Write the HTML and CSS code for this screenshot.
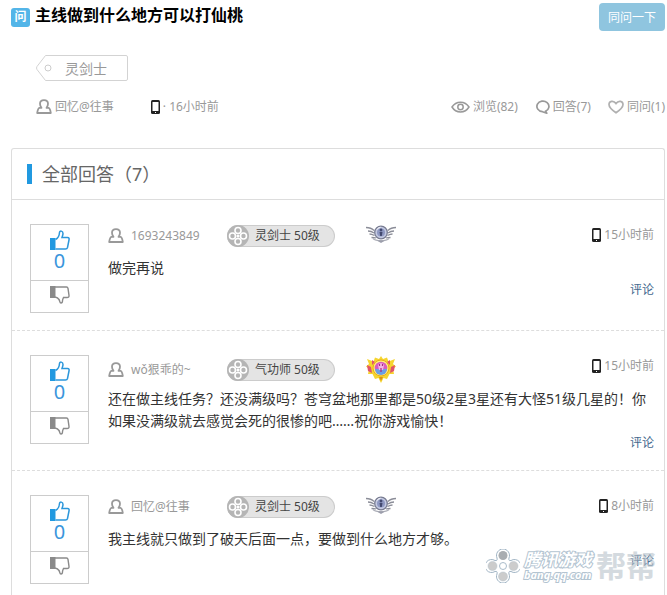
FILE: index.html
```html
<!DOCTYPE html>
<html lang="zh-CN">
<head>
    <meta charset="UTF-8">
    <meta name="viewport" content="width=device-width, initial-scale=1.0">
    <title>主线做到什么地方可以打仙桃</title>
    <link rel="stylesheet" href="styles.css">
</head>
<body>
    <!-- shared icons -->
    <svg class="sprite" aria-hidden="true">
        <symbol id="user" viewBox="0 0 16 16">
            <path d="M5.500 8.800C4.300 7.500 4 6 4 4.800C4 2.500 5.500 1.200 8 1.200S12 2.500 12 4.800C12 6 11.700 7.500 10.500 8.800H12.500C13.500 9 14.300 10.500 14.800 14H1.200C1.700 10.500 2.500 9 3.500 8.800z" fill="none" stroke="#999" stroke-width="1.800" stroke-linejoin="round"/>
        </symbol>
        <symbol id="phone" viewBox="0 0 9 14">
            <rect x="0" y="0" width="9" height="14" rx="1.5" fill="#222"/>
            <rect x="1.5" y="2" width="6" height="9" fill="#fff"/>
            <rect x="4" y="12" width="1" height="1" fill="#fff"/>
        </symbol>
        <symbol id="up" viewBox="0 0 20 20">
            <path d="M5.5 9.5C8.500 8 9.300 6 9.500 2.500C9.600.500 13 .500 13 3.500C13 5 12.500 6 12 7.500H17.500C19 7.500 19.300 8.500 19 10L17.500 17.500C17.200 18.700 16.700 19 15.500 19H5.500" fill="none" stroke="#2b97db" stroke-width="1.500"/>
            <path d="M0 8h5.500v12H0z" fill="#2199e0"/>
        </symbol>
        <symbol id="down" viewBox="0 0 20 18">
            <path d="M5 1h11.500c1 0 1.300.400 1.500 1.300l1 7c.200 1.500-.500 2.200-2 2.200h-3.500c-.500 1-1 2-1 3.200c0 1.500-.600 2.300-1.500 2.300c-1.500 0-1-2-2-3.500C8 12 7 11.500 5 11" fill="none" stroke="#8a8a8a" stroke-width="1.400"/>
            <path d="M0 0h5.500v12H0z" fill="#8a8a8a"/>
        </symbol>
        <symbol id="clover" viewBox="0 0 22 22">
            <circle cx="11" cy="11" r="11" fill="#b5b5b5"/>
            <g fill="#b5b5b5" stroke="#fff" stroke-width="1.600">
                <circle cx="11" cy="5.500" r="3"/>
                <circle cx="5.500" cy="11" r="3"/>
                <circle cx="16.500" cy="11" r="3"/>
                <circle cx="11" cy="16.500" r="3"/>
            </g>
            <circle cx="11" cy="11" r="1.500" fill="#fff"/>
        </symbol>
        <symbol id="silver" viewBox="0 0 30 22">
            <g fill="none" stroke="#8b8d98" stroke-width="1.300">
                <path d="M0 2.500c3 0 6 1 8 3M2 6c2 0 4 .500 6 2M3.500 9c2 0 3 .500 5 1.500M5.500 12.500c2 0 3 0 4.500.500"/>
                <path d="M30 2.500c-3 0-6 1-8 3M28 6c-2 0-4 .500-6 2M26.500 9c-2 0-3 .500-5 1.500M24.500 12.500c-2 0-3 0-4.500.500"/>
                <path d="M7 13.500c3 3 13 3 16 0" stroke="#aeb0b9"/>
            </g>
            <circle cx="15" cy="7.500" r="6.300" fill="#c4cae2" stroke="#777b91" stroke-width="1.300"/>
            <circle cx="15" cy="7.500" r="4" fill="#8e98c2"/>
            <circle cx="15" cy="5" r="1.400" fill="#42496f"/>
            <path d="M13.500 7h3l-.700 4h-1.600z" fill="#42496f"/>
            <path d="M11 4.500c1-1.500 2-2 3.500-2.300" fill="none" stroke="#fff"/>
            <path d="M11 15.500h8l-4 2.500z" fill="#9b9dab"/>
        </symbol>
        <symbol id="gold" viewBox="0 0 30 28">
            <path d="M15 0l2 3 4-1.500 1.500 4L29 3l-2 5 3 2.500-3 2.500 1 5-4.500 0-2.500 5-3.500-1L15 27l-2.500-5L9 23l-2.500-5L2 18l1-5-3-2.500L3 8 1 3l6.500 2.500L9 1.500 13 3z" fill="#f6d52f"/>
            <path d="M1 9l4 2 1 6-4-2zM29 9l-4 2-1 6 4-2zM6 4l3 2-3 3zM24 4l-3 2 3 3z" fill="#e0526b"/>
            <path d="M13 21h4l-2 4z" fill="#d99217"/>
            <circle cx="15" cy="12" r="8" fill="#fff07a" stroke="#e8aa1c"/>
            <circle cx="15" cy="12" r="6.300" fill="#d95bc0"/>
            <path d="M9 13a6 6 0 0 0 12 0z" fill="#6a9fe6"/>
            <path d="M12 9a3.500 3.500 0 0 1 6 0l-1 5h-4z" fill="#f5b5e5"/>
            <path d="M13.500 8v2M16.500 8v2M15 12v4" stroke="#a72b80" stroke-width="1.200"/>
        </symbol>
    </svg>

    <header class="question">
        <div class="title-row">
            <span class="ask">问</span>
            <h1>主线做到什么地方可以打仙桃</h1>
            <button type="button" class="same-btn">同问一下</button>
        </div>
        <a href="#" class="tag">
            <svg viewBox="0 0 92 26" aria-hidden="true">
                <path d="M9.500.500H90a1.500 1.500 0 0 1 1.500 1.500v22a1.500 1.500 0 0 1-1.500 1.500H9.500L1 14.500q-1-1.500 0-3z" fill="#fff" stroke="#d3d3d3"/>
                <circle cx="12" cy="13" r="3" fill="none" stroke="#ccc"/>
            </svg>
            <span>灵剑士</span>
        </a>
        <div class="meta">
            <span class="author"><svg class="i-user"><use href="#user"/></svg>回忆@往事</span>
            <span class="when"><svg class="i-phone"><use href="#phone"/></svg>· 16小时前</span>
            <div class="counts">
                <span>
                    <svg width="19" height="12" viewBox="0 0 19 12" fill="none" stroke="#999" stroke-width="1.500"><path d="M1 6c4-6.500 13-6.500 17 0c-4 6.500-13 6.500-17 0z"/><circle cx="9.500" cy="6" r="2.700"/></svg>浏览(82)
                </span>
                <span>
                    <svg width="15" height="14" viewBox="0 0 15 14" fill="none" stroke="#999" stroke-width="1.700"><path d="M10.500 11.200A6 5.300 0 1 0 7.500 11.700L11.800 13.200L10.500 11.200z" stroke-linejoin="round"/></svg>回答(7)
                </span>
                <span>
                    <svg width="16" height="14" viewBox="0 0 16 14" fill="none" stroke="#b0b0b0" stroke-width="1.700"><path d="M8 12.800C4 10 1 7.500 1 4.500C1 1 5.500 0 8 3.500C10.500 0 15 1 15 4.500C15 7.500 12 10 8 12.800z"/></svg>同问(1)
                </span>
            </div>
        </div>
    </header>

    <main class="answers">
        <h2>全部回答（7）</h2>

        <article class="answer">
            <div class="vote">
                <button type="button" class="agree" aria-label="顶"><svg><use href="#up"/></svg>0</button>
                <button type="button" class="against" aria-label="踩"><svg><use href="#down"/></svg></button>
            </div>
            <div class="body">
                <div class="head">
                    <div class="who">
                        <svg class="i-user"><use href="#user"/></svg>
                        <a href="#" class="name">1693243849</a>
                        <span class="level"><svg><use href="#clover"/></svg>灵剑士 50级</span>
                        <svg class="medal"><use href="#silver"/></svg>
                    </div>
                    <span class="time"><svg class="i-phone"><use href="#phone"/></svg>15小时前</span>
                </div>
                <p>做完再说</p>
                <a href="#" class="comment">评论</a>
            </div>
        </article>

        <article class="answer">
            <div class="vote">
                <button type="button" class="agree" aria-label="顶"><svg><use href="#up"/></svg>0</button>
                <button type="button" class="against" aria-label="踩"><svg><use href="#down"/></svg></button>
            </div>
            <div class="body">
                <div class="head">
                    <div class="who">
                        <svg class="i-user"><use href="#user"/></svg>
                        <a href="#" class="name">wǒ狠乖的~</a>
                        <span class="level"><svg><use href="#clover"/></svg>气功师 50级</span>
                        <svg class="medal gold"><use href="#gold"/></svg>
                    </div>
                    <span class="time"><svg class="i-phone"><use href="#phone"/></svg>15小时前</span>
                </div>
                <p>还在做主线任务？还没满级吗？苍穹盆地那里都是50级2星3星还有大怪51级几星的！你如果没满级就去感觉会死的很惨的吧……祝你游戏愉快！</p>
                <a href="#" class="comment">评论</a>
            </div>
        </article>

        <article class="answer">
            <div class="vote">
                <button type="button" class="agree" aria-label="顶"><svg><use href="#up"/></svg>0</button>
                <button type="button" class="against" aria-label="踩"><svg><use href="#down"/></svg></button>
            </div>
            <div class="body">
                <div class="head">
                    <div class="who">
                        <svg class="i-user"><use href="#user"/></svg>
                        <a href="#" class="name">回忆@往事</a>
                        <span class="level"><svg><use href="#clover"/></svg>灵剑士 50级</span>
                        <svg class="medal"><use href="#silver"/></svg>
                    </div>
                    <span class="time"><svg class="i-phone"><use href="#phone"/></svg>8小时前</span>
                </div>
                <p>我主线就只做到了破天后面一点，要做到什么地方才够。</p>
                <a href="#" class="comment">评论</a>
            </div>
            <div class="watermark">
                <svg width="34" height="34" viewBox="0 0 34 34">
                    <path d="M11 9a6.500 6.500 0 1 1 12 0c-.500 2 0 3 2 2.500a6.500 6.500 0 1 1 0 11c-2-.500-2.500.500-2 2.500a6.500 6.500 0 1 1-12 0c.500-2 0-3-2-2.500a6.500 6.500 0 1 1 0-11c2 .500 2.500-.500 2-2.500z" fill="#fff" stroke="#a0b4c4"/>
                    <circle cx="17" cy="6.500" r="4.500" fill="#a9adb1"/>
                    <g fill="#ccc" stroke="#b5c2cc" stroke-width=".500">
                        <circle cx="6.500" cy="17" r="4.500"/>
                        <circle cx="27.500" cy="17" r="4.500"/>
                        <circle cx="17" cy="27.500" r="4.500"/>
                    </g>
                    <circle cx="17" cy="17" r="3.500" fill="#fff" stroke="#a9bccb"/>
                </svg>
                <div class="brand">
                    <span>腾讯游戏</span>
                    <small>bang.qq.com</small>
                </div>
                <b>帮帮</b>
            </div>
        </article>
    </main>
</body>
</html>
```
FILE: styles.css
```css
* {
    margin: 0;
    padding: 0;
    box-sizing: border-box;
}
body {
    padding: 3px 2px 0 11px;
    background-color: #fff;
    color: #999;
    font-family: "Noto Sans", "Noto Sans CJK SC", sans-serif;
    font-size: 12px;
    line-height: 20px;
}
a {
    color: inherit;
    text-decoration: none;
}
button {
    font-family: inherit;
    cursor: pointer;
}
svg {
    display: block;
    flex: none;
}
.sprite {
    position: absolute;
    width: 0;
    height: 0;
}
.i-user {
    width: 16px;
    height: 16px;
}
.i-phone {
    width: 9px;
    height: 14px;
}

/* question */
.title-row {
    display: flex;
    align-items: center;
    height: 28px;
}
.ask {
    width: 19px;
    height: 19px;
    margin-right: 5px;
    border-radius: 3px;
    background-color: #53b5e8;
    color: #fff;
    font-weight: 700;
    line-height: 18px;
    text-align: center;
}
h1 {
    flex: 1;
    color: #000;
    font-size: 16px;
    line-height: 24px;
    padding-bottom: 4px;
}
.same-btn {
    width: 66px;
    height: 28px;
    border: 0;
    border-radius: 4px;
    background-color: #8fc5df;
    color: #fff;
    font-size: 12px;
}
.tag {
    display: grid;
    width: 92px;
    height: 26px;
    margin: 24px 0 0 25px;
}
.tag svg,
.tag span {
    grid-area: 1 / 1;
}
.tag span {
    padding-left: 29px;
    font-size: 14px;
    line-height: 28px;
}
.meta {
    display: flex;
    align-items: center;
    margin: 16px 0 31px 25px;
}
.meta span {
    display: flex;
    align-items: center;
    gap: 3px;
}
.when {
    margin-left: 37px;
}
.counts {
    display: flex;
    gap: 17px;
    margin-left: auto;
}

/* answers */
.answers {
    border: 1px solid #ddd;
    border-bottom: 0;
    border-radius: 3px 3px 0 0;
}
h2 {
    display: flex;
    align-items: center;
    height: 51px;
    padding-left: 15px;
    border-bottom: 1px solid #ddd;
    color: #666;
    font-size: 18px;
    font-weight: 400;
}
h2::before {
    content: "";
    width: 5px;
    height: 20px;
    margin-right: 10px;
    background-color: #2199e0;
}
.answer {
    position: relative;
    display: flex;
    align-items: flex-start;
    gap: 19px;
    padding: 24px 10px 17px 18px;
    border-bottom: 1px dashed #ddd;
}
.answer:last-child {
    padding-bottom: 11px;
    border-bottom: 0;
}
.vote {
    width: 59px;
    border: 1px solid #ccc;
}
.vote button {
    display: flex;
    flex-direction: column;
    align-items: center;
    width: 100%;
    border: 0;
    background-color: #fff;
}
.vote .agree {
    height: 56px;
    padding-top: 5px;
    border-bottom: 1px solid #ccc;
    color: #3a95dc;
    font-size: 20px;
    line-height: 22px;
}
.agree svg {
    width: 20px;
    height: 20px;
}
.vote .against {
    height: 31px;
    padding-top: 5px;
}
.against svg {
    width: 20px;
    height: 18px;
}
.body {
    flex: 1;
    display: flex;
    flex-direction: column;
}
.head {
    display: flex;
    align-items: flex-start;
    justify-content: space-between;
    height: 33px;
}
.who {
    display: flex;
    align-items: center;
    padding-top: 1px;
}
.name {
    width: 96px;
    margin-left: 7px;
}
.level {
    display: flex;
    align-items: center;
    gap: 6px;
    width: 108px;
    height: 22px;
    border: 1px solid #ccc;
    border-left: 0;
    border-radius: 11px;
    background-color: #e4e4e4;
    color: #444;
}
.level svg {
    width: 22px;
    height: 22px;
}
.medal {
    width: 30px;
    height: 22px;
    margin-left: 31px;
}
.gold {
    height: 28px;
}
.time {
    display: flex;
    align-items: center;
    gap: 3px;
    padding-top: 1px;
}
.body p {
    color: #333;
    font-size: 14px;
    line-height: 22px;
}
.comment {
    align-self: flex-end;
    margin-top: 1px;
    color: #45688e;
}

/* site mark over the last answer */
.watermark {
    position: absolute;
    right: 8px;
    bottom: 12px;
    display: flex;
    align-items: center;
    gap: 4px;
    pointer-events: none;
}
.brand {
    display: flex;
    flex-direction: column;
    color: #fff;
    font-style: italic;
    font-weight: 700;
    -webkit-text-stroke: 2px #b3c4d1;
    paint-order: stroke fill;
}
.brand span {
    font-size: 17px;
    line-height: 18px;
}
.brand small {
    font-size: 11px;
    line-height: 12px;
}
.watermark b {
    color: #b9c3ca;
    font-size: 30px;
    line-height: 34px;
    opacity: .6;
}
```
